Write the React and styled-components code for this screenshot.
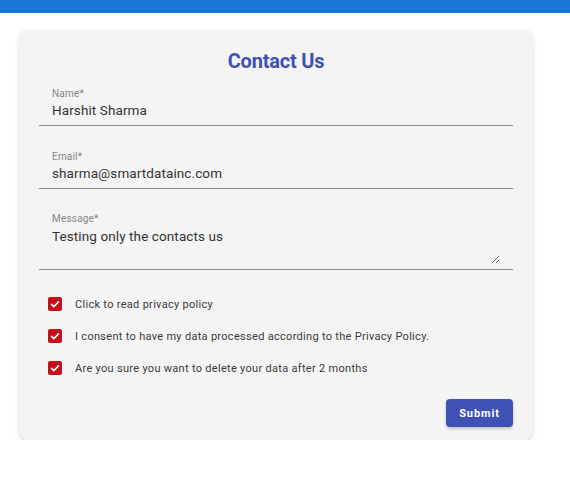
import React, { useState } from 'react';
import styled, { createGlobalStyle } from 'styled-components';

const GlobalStyle = createGlobalStyle`
  body {
    margin: 0;
    background: #fff;
    font-family: Roboto, "Liberation Sans", sans-serif;
  }
`;

const CHECKS = [
  'Click to read privacy policy',
  'I consent to have my data processed according to the Privacy Policy.',
  'Are you sure you want to delete your data after 2 months'
];

export default function App() {
  const [name, setName] = useState('Harshit Sharma');
  const [email, setEmail] = useState('sharma@smartdatainc.com');
  const [message, setMessage] = useState('Testing only the contacts us');
  const [checked, setChecked] = useState([true, true, true]);

  const toggle = (i) => setChecked(prev => prev.map((c, j) => (j === i ? !c : c)));

  return (
    <>
      <GlobalStyle />
      <TopBar />
      <Card>
        <Title>Contact Us</Title>

        <Field gap="15px">
          <Label>Name*</Label>
          <Input value={name} onChange={e => setName(e.target.value)} />
        </Field>

        <Field gap="25px">
          <Label>Email*</Label>
          <Input value={email} onChange={e => setEmail(e.target.value)} />
        </Field>

        <Field gap="24px">
          <Label>Message*</Label>
          <TextArea rows={2} value={message} onChange={e => setMessage(e.target.value)} />
        </Field>

        <Checks>
          {CHECKS.map((text, i) => (
            <CheckRow key={i} onClick={() => toggle(i)}>
              <Box on={checked[i]}>
                {checked[i] && (
                  <svg width="12" height="12" viewBox="0 0 12 12">
                    <path d="M2.2 6.2 L4.8 8.7 L9.9 3.4" fill="none" stroke="#fff" strokeWidth="1.6" />
                  </svg>
                )}
              </Box>
              <CheckText>{text}</CheckText>
            </CheckRow>
          ))}
        </Checks>

        <Actions>
          <Submit>Submit</Submit>
        </Actions>
      </Card>
    </>
  );
}

const TopBar = styled.div`
  height: 13px;
  background: #1976d2;
`;

const Card = styled.div`
  margin: 17px 0 0 20px;
  width: 512px;
  box-sizing: border-box;
  padding: 19px 19px 13px;
  background: #f4f4f4;
  border-radius: 8px;
  box-shadow: 0 2px 6px rgba(0,0,0,0.12), 0 1px 2px rgba(0,0,0,0.06);
`;

const Title = styled.h2`
  margin: 0;
  text-align: center;
  font-size: 20px;
  line-height: 24px;
  font-weight: 700;
  color: #3f51b5;
  letter-spacing: -0.2px;
`;

const Field = styled.div`
  margin-top: ${p => p.gap};
  padding: 0 0 5px;
  border-bottom: 1px solid #8a8a8a;
`;

const Label = styled.div`
  padding-left: 13px;
  font-size: 10px;
  line-height: 12px;
  color: #858585;
  letter-spacing: 0.2px;
`;

const Input = styled.input`
  display: block;
  width: 100%;
  box-sizing: border-box;
  border: none;
  outline: none;
  background: transparent;
  padding: 0 13px;
  font-family: Roboto, "Liberation Sans", sans-serif;
  font-size: 13.5px;
  line-height: 20px;
  height: 20px;
  color: #333;
  letter-spacing: 0.1px;
`;

const TextArea = styled.textarea`
  display: block;
  margin: 1px 13px 0;
  width: calc(100% - 26px);
  box-sizing: border-box;
  height: 38px;
  border: none;
  outline: none;
  background: transparent;
  padding: 0;
  resize: vertical;
  font-family: Roboto, "Liberation Sans", sans-serif;
  font-size: 13.5px;
  line-height: 20px;
  color: #333;
  letter-spacing: 0.1px;
`;

const Checks = styled.div`
  display: flex;
  flex-direction: column;
  gap: 14px;
  margin-top: 25px;
  padding-left: 9px;
`;

const CheckRow = styled.label`
  display: flex;
  align-items: center;
  gap: 13px;
  height: 18px;
  cursor: pointer;
`;

const Box = styled.span`
  width: 14px;
  height: 14px;
  border-radius: 2px;
  display: flex;
  align-items: center;
  justify-content: center;
  background: ${p => (p.on ? '#c0121b' : 'transparent')};
  border: ${p => (p.on ? 'none' : '2px solid #777')};
  box-sizing: border-box;
`;

const CheckText = styled.span`
  font-size: 11px;
  color: #3a3a3a;
  letter-spacing: 0.3px;
`;

const Actions = styled.div`
  display: flex;
  justify-content: flex-end;
  margin-top: 22px;
`;

const Submit = styled.button`
  width: 67px;
  height: 28px;
  border: none;
  border-radius: 4px;
  background: #3f51b5;
  color: #fff;
  font-family: Roboto, "Liberation Sans", sans-serif;
  font-weight: 700;
  font-size: 11px;
  letter-spacing: 0.9px;
  cursor: pointer;
  box-shadow: 0 2px 3px rgba(0,0,0,0.2);
`;
